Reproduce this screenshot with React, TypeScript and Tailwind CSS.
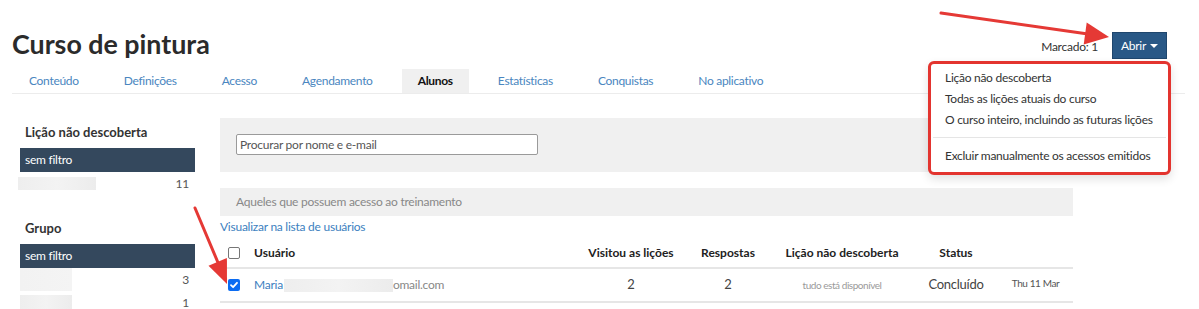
import React from "react";

const tabs = ["Conteúdo", "Definições", "Acesso", "Agendamento", "Alunos", "Estatísticas", "Conquistas", "No aplicativo"];

function Blur({ w, h, className = "" }: { w: string; h: string; className?: string }) {
  return (
    <div
      className={`${w} ${h} ${className} bg-gradient-to-r from-[#eeeeee] via-[#f3f3f3] to-[#ececec]`}
    />
  );
}

export default function App() {
  return (
    <div
      className="relative w-[1199px] h-[309px] overflow-hidden bg-white text-[#333] tracking-[-0.25px]"
      style={{ fontFamily: "Lato, 'Liberation Sans', sans-serif" }}
    >
      {/* Header */}
      <div className="flex justify-between items-start h-[69px] pt-[31px] pl-[12px] pr-[32px]">
        <h1 className="text-[26.8px] leading-[26px] font-bold text-[#2b2b2b] tracking-normal">Curso de pintura</h1>
        <div className="flex items-center gap-[14px] mt-[1px]">
          <span className="text-[12px] text-[#333] mt-[3px]">Marcado: 1</span>
          <button className="h-[27px] w-[55px] bg-[#295886] text-white text-[12px] flex items-center justify-center gap-[4px] border border-[#1f466d]">
            <span>Abrir</span>
            <span className="w-0 h-0 border-l-[4px] border-r-[4px] border-t-[4px] border-l-transparent border-r-transparent border-t-white mt-[1px]" />
          </button>
        </div>
      </div>

      {/* Tabs */}
      <div className="ml-[12px] mr-[14px] flex h-[25px] pl-[1px] gap-[13px] border-b border-[#ececec]">
        {tabs.map((t) => (
          <div
            key={t}
            className={`h-[24px] px-[16px] flex items-center text-[12px] tracking-[-0.3px] ${
              t === "Alunos" ? "bg-[#f0f0f0] text-[#111] font-bold" : "text-[#4a86c0]"
            }`}
          >
            {t}
          </div>
        ))}
      </div>

      {/* Content */}
      <div className="flex pl-[20px]">
        {/* Sidebar */}
        <div className="w-[175px] pt-[28px]">
          <div className="h-[20px] leading-[20px] text-[13px] font-bold pl-[5px] mb-[6px] tracking-normal">Lição não descoberta</div>
          <div className="h-[24px] bg-[#34485d] text-white text-[12px] pl-[5px] flex items-center">sem filtro</div>
          <div className="h-[23px] flex items-center justify-between pr-[6px]">
            <Blur w="w-[78px]" h="h-[13px]" className="-ml-[2px]" />
            <span className="text-[12px] text-[#555]">11</span>
          </div>

          <div className="h-[20px] leading-[20px] text-[13px] font-bold pl-[5px] mt-[23px] mb-[6px] tracking-normal">Grupo</div>
          <div className="h-[24px] bg-[#34485d] text-white text-[12px] pl-[5px] flex items-center">sem filtro</div>
          <div className="h-[23px] flex items-center justify-between pr-[6px]">
            <Blur w="w-[52px]" h="h-[23px]" className="from-[#f2f2f2] via-[#ececec] to-[#f4f4f4]" />
            <span className="text-[12px] text-[#555]">3</span>
          </div>
          <div className="h-[23px] flex items-center justify-between pr-[6px]">
            <Blur w="w-[52px]" h="h-[15px]" />
            <span className="text-[12px] text-[#555]">1</span>
          </div>
        </div>

        {/* Main */}
        <div className="w-[853px] ml-[25px] pt-[24px]">
          <div className="h-[54px] bg-[#f0f0f0] pt-[16px] pl-[16px]">
            <div className="w-[302px] h-[21px] bg-white border border-[#9a9a9a] rounded-[2px] flex items-center pl-[3px] text-[12px] text-[#555]">
              Procurar por nome e e-mail
            </div>
          </div>
          <div className="mt-[16px] h-[28px] bg-[#f0f0f0] pl-[16px] flex items-center text-[12px] text-[#888]">
            Aqueles que possuem acesso ao treinamento
          </div>
          <div className="mt-[2px] h-[18px] leading-[18px] text-[12px] text-[#3d7fc0]">Visualizar na lista de usuários</div>

          {/* Table header */}
          <div className="grid grid-cols-[34px_322px_110px_84px_144px_84px_75px] h-[33px] pt-[3px] items-center border-b-2 border-[#e6e6e6] text-[12px] font-bold text-[#222] tracking-normal">
            <div className="pl-[8px] flex items-center">
              <span className="w-[12px] h-[12px] border border-[#767676] rounded-[2px] bg-white" />
            </div>
            <div>Usuário</div>
            <div className="text-center">Visitou as lições</div>
            <div className="text-center">Respostas</div>
            <div className="text-center">Lição não descoberta</div>
            <div className="text-center">Status</div>
            <div />
          </div>

          {/* Row */}
          <div className="grid grid-cols-[34px_322px_110px_84px_144px_84px_75px] h-[34px] items-center border-b-2 border-[#e6e6e6] text-[12px] text-[#444]">
            <div className="pl-[8px] flex items-center">
              <span className="w-[12px] h-[12px] rounded-[2px] bg-[#0b6cf2] flex items-center justify-center">
                <svg width="10" height="10" viewBox="0 0 10 10">
                  <path d="M2 5.2 L4.1 7.2 L8 2.8" fill="none" stroke="white" strokeWidth="1.8" strokeLinecap="round" strokeLinejoin="round" />
                </svg>
              </span>
            </div>
            <div className="flex items-center">
              <span className="text-[#3d7fc0]">Maria</span>
              <Blur w="w-[109px]" h="h-[13px]" className="ml-[1px]" />
              <span className="text-[#888]">omail.com</span>
            </div>
            <div className="text-center text-[13px]">2</div>
            <div className="text-center text-[13px]">2</div>
            <div className="text-center text-[10px] text-[#9a9a9a] tracking-[-0.45px]">tudo está disponível</div>
            <div className="text-center text-[13px]">Concluído</div>
            <div className="text-center text-[10px] text-[#555] -mt-[4px] tracking-[-0.4px]">Thu 11 Mar</div>
          </div>
        </div>
      </div>

      {/* Dropdown menu */}
      <div className="absolute left-[928px] top-[61px] w-[243px] h-[114px] border-[3px] border-[#e3342f] rounded-[6px] bg-white shadow-[0_4px_10px_rgba(0,0,0,0.12)]">
        <div className="pt-[3px] pb-[6px] text-[12px] text-[#333] tracking-[-0.27px]">
          <div className="h-[21px] flex items-center pl-[14px]">Lição não descoberta</div>
          <div className="h-[21px] flex items-center pl-[14px]">Todas as lições atuais do curso</div>
          <div className="h-[21px] flex items-center pl-[14px]">O curso inteiro, incluindo as futuras lições</div>
          <div className="my-[7px] h-px bg-[#e5e5e5] mx-[2px]" />
          <div className="h-[21px] flex items-center pl-[14px]">Excluir manualmente os acessos emitidos</div>
        </div>
      </div>

      {/* Annotation arrows */}
      <svg className="absolute inset-0 pointer-events-none" width="1199" height="309" viewBox="0 0 1199 309">
        <line x1="941" y1="13" x2="1088" y2="34" stroke="#e53935" strokeWidth="3" strokeLinecap="round" />
        <polygon points="1109,37 1086.7,22.5 1083.7,44.5" fill="#e53935" />
        <line x1="195" y1="208" x2="219" y2="265" stroke="#e53935" strokeWidth="3" strokeLinecap="round" />
        <polygon points="227,284 208.5,265.8 226.9,258" fill="#e53935" />
      </svg>
    </div>
  );
}
